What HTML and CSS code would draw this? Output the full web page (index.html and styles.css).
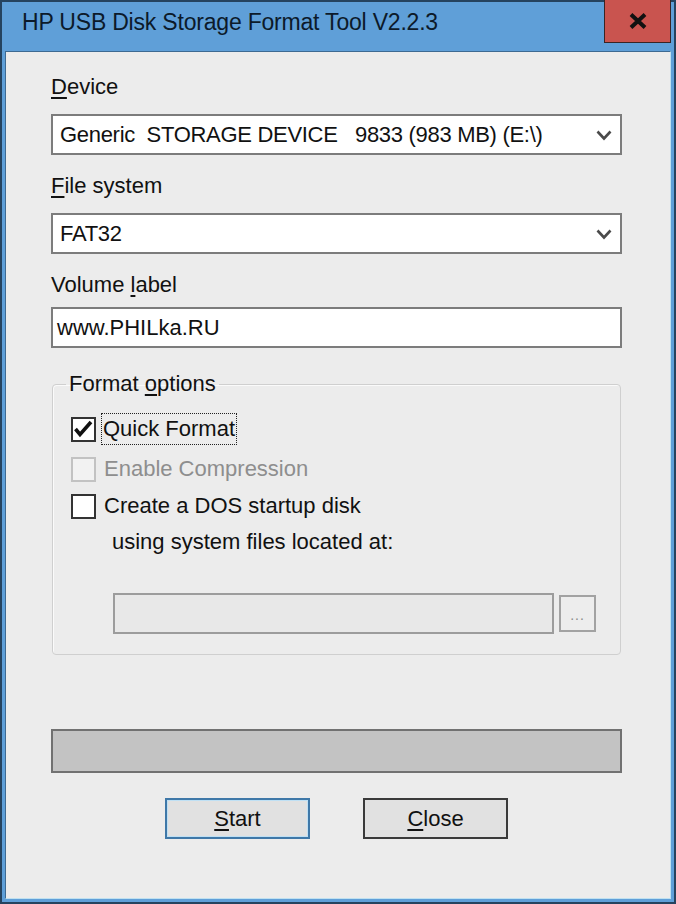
FILE: index.html
```html
<!DOCTYPE html>
<html>
<head>
<meta charset="utf-8">
<title>HP USB Disk Storage Format Tool</title>
<link rel="stylesheet" href="styles.css">
</head>
<body>
<div class="window">
  <div class="titlebar">
    <span class="title">HP USB Disk Storage Format Tool V2.2.3</span>
    <div class="close-x">
      <svg width="18" height="16" viewBox="0 0 18 16"><path d="M2 1.5 L16 14.5 M16 1.5 L2 14.5" stroke="#111" stroke-width="4" stroke-linecap="butt" fill="none"/></svg>
    </div>
  </div>
  <div class="client">
    <div class="label lbl-first"><u>D</u>evice</div>
    <div class="combo">
      <span class="combo-text">Generic  STORAGE DEVICE   9833 (983 MB) (E:\)</span>
      <svg class="chev" width="16" height="12" viewBox="0 0 16 12"><path d="M1.5 2.5 L8 9.5 L14.5 2.5" stroke="#4a4a4a" stroke-width="2.6" fill="none"/></svg>
    </div>
    <div class="label lbl-next"><u>F</u>ile system</div>
    <div class="combo">
      <span class="combo-text">FAT32</span>
      <svg class="chev" width="16" height="12" viewBox="0 0 16 12"><path d="M1.5 2.5 L8 9.5 L14.5 2.5" stroke="#4a4a4a" stroke-width="2.6" fill="none"/></svg>
    </div>
    <div class="label lbl-vol">Volume <u>l</u>abel</div>
    <div class="textbox">www.PHILka.RU</div>

    <fieldset class="group">
      <legend class="legend">Format <u>o</u>ptions</legend>
      <div class="check-row">
        <span class="check">
          <svg width="21" height="21" viewBox="0 0 21 21"><path d="M2.5 10 L7 15.5 L18 3" stroke="#111" stroke-width="3.6" fill="none"/></svg>
        </span>
        <span class="check-label focus">Quick Format</span>
      </div>
      <div class="check-row row-2">
        <span class="check disabled"></span>
        <span class="check-label dim">Enable Compression</span>
      </div>
      <div class="check-row row-3">
        <span class="check"></span>
        <span class="check-label">Create a DOS startup disk</span>
      </div>
      <div class="sub-text">using system files located at:</div>
      <div class="path-row">
        <div class="path-box"></div>
        <div class="browse">...</div>
      </div>
    </fieldset>

    <div class="progress"></div>

    <div class="buttons">
      <div class="btn btn-default"><u>S</u>tart</div>
      <div class="btn"><u>C</u>lose</div>
    </div>
  </div>
</div>
</body>
</html>
```

FILE: styles.css
```css
html, body {
  margin: 0;
  padding: 0;
}

body {
  width: 676px;
  height: 904px;
  overflow: hidden;
  font-family: "Liberation Sans", Arial, sans-serif;
  color: #111;
}

.window {
  box-sizing: border-box;
  width: 676px;
  height: 904px;
  border: 2px solid #25435f;
  background: #5f9fd8;
  display: flex;
  flex-direction: column;
}

.titlebar {
  height: 49px;
  display: flex;
  align-items: flex-start;
  justify-content: space-between;
  flex: none;
}

.title {
  font-size: 23px;
  line-height: 27px;
  letter-spacing: -0.2px;
  padding: 7px 0 0 20px;
  color: #0c1a2a;
}

.close-x {
  box-sizing: border-box;
  width: 67px;
  height: 43px;
  margin: -2px 3px 0 0;
  background: #c9544f;
  border: 1px solid #3b2424;
  border-top: none;
  display: flex;
  align-items: center;
  justify-content: center;
}

.client {
  flex: 1;
  margin: 0 3px 3px 3px;
  background: #ececec;
  border: 1px solid #3d6a92;
  border-bottom-color: #bfe0f0;
  border-right-color: #bfe0f0;
  padding: 22px 48px 0 45px;
  font-size: 22px;
  line-height: 26px;
}

.label {
  height: 26px;
}

.lbl-first { margin-bottom: 14px; }
.lbl-next { margin-top: 18px; margin-bottom: 14px; }
.lbl-vol { margin-top: 18px; margin-bottom: 9px; }

u {
  text-decoration: underline;
  text-underline-offset: 3px;
  text-decoration-thickness: 1.5px;
}

.combo {
  box-sizing: border-box;
  height: 41px;
  background: #fff;
  border: 2px solid #7c7c7c;
  display: flex;
  align-items: center;
  justify-content: space-between;
  padding: 0 8px 0 7px;
}

.combo-text {
  white-space: pre;
  letter-spacing: -0.3px;
}

.chev {
  flex: none;
}

.textbox {
  box-sizing: border-box;
  height: 41px;
  background: #fff;
  border: 2px solid #7c7c7c;
  display: flex;
  align-items: center;
  padding-left: 4px;
}

.group {
  margin: 23px 1px 0 1px;
  padding: 16px 18px 20px 18px;
  border: 1px solid #cfcfcf;
  border-radius: 4px;
  box-shadow: inset 1px 1px 0 #fafafa;
  min-width: 0;
}

.legend {
  padding: 0 3px;
  margin-left: -5px;
  line-height: 26px;
}

.check-row {
  display: flex;
  align-items: center;
  height: 32px;
}

.row-2 { margin-top: 8px; }
.row-3 { margin-top: 5px; }

.check {
  box-sizing: border-box;
  width: 25px;
  height: 25px;
  border: 2px solid #333;
  background: #fff;
  display: flex;
  align-items: center;
  justify-content: center;
  flex: none;
}

.check.disabled {
  border-color: #c2c2c2;
  background: #f2f2f2;
}

.check-label {
  margin-left: 8px;
}

.check-label.focus {
  margin-left: 5px;
  padding: 2px 1px;
  border: 1px dotted #222;
  line-height: 26px;
}

.check-label.dim {
  color: #8e8e8e;
}

.sub-text {
  margin: 7px 0 0 41px;
  height: 26px;
}

.path-row {
  display: flex;
  align-items: center;
  margin: 38px 0 0 42px;
  gap: 5px;
}

.path-box {
  box-sizing: border-box;
  width: 441px;
  height: 41px;
  background: #e8e8e8;
  border: 2px solid #9c9c9c;
}

.browse {
  box-sizing: border-box;
  width: 37px;
  height: 37px;
  border: 2px solid #a2a2a2;
  background: #ededed;
  color: #8a8a8a;
  font-size: 14px;
  line-height: 14px;
  letter-spacing: 1px;
  display: flex;
  align-items: flex-end;
  justify-content: center;
  padding-bottom: 8px;
}

.progress {
  box-sizing: border-box;
  height: 44px;
  margin-top: 74px;
  background: #c3c3c3;
  border: 2px solid #717171;
}

.buttons {
  display: flex;
  justify-content: center;
  gap: 53px;
  margin-top: 25px;
}

.btn {
  box-sizing: border-box;
  width: 145px;
  height: 41px;
  background: #e1e1e1;
  border: 2px solid #3a3a3a;
  display: flex;
  align-items: center;
  justify-content: center;
}

.btn-default {
  border-color: #3f78a8;
  box-shadow: inset 0 0 0 1px #bfe0f4;
}
```
